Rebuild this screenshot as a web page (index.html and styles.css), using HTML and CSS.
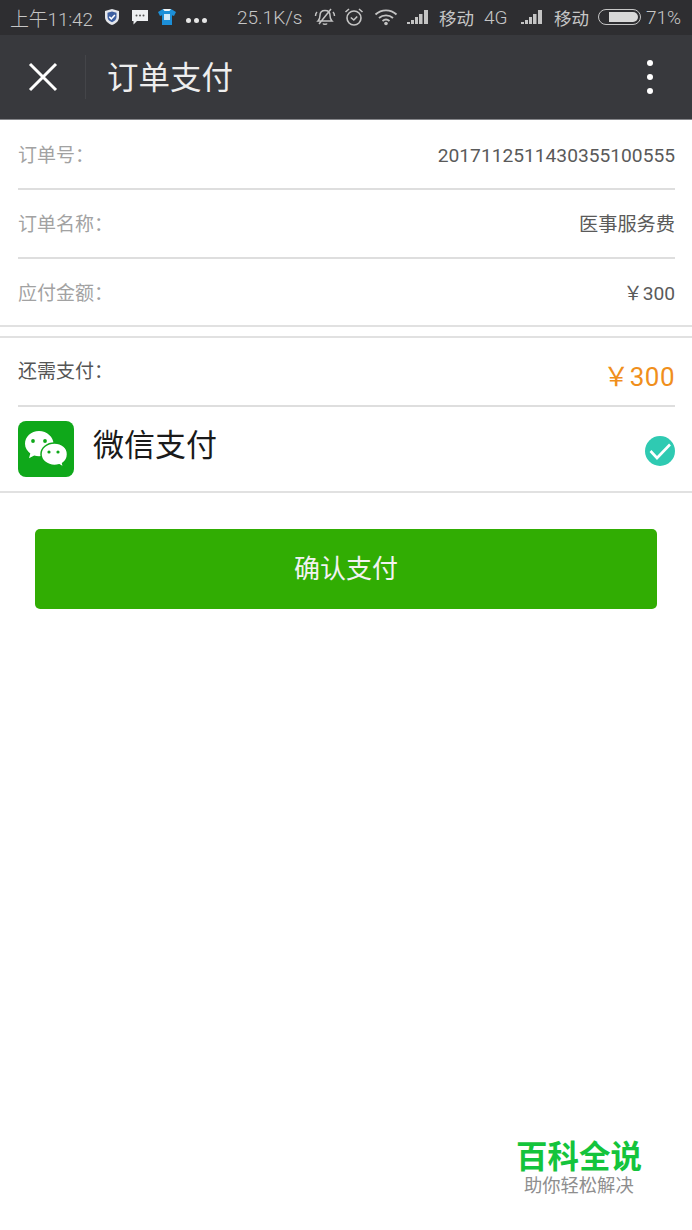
FILE: index.html
```html
<!DOCTYPE html>
<html lang="zh">
<head>
<meta charset="utf-8">
<title>订单支付</title>
<link rel="stylesheet" href="styles.css">
</head>
<body>
<div class="page">
  <div class="status">
    <span class="st-time">上午11:42</span>
    <svg class="ic-shield" width="16" height="18" viewBox="0 0 16 18"><path d="M8 1l7 2v6c0 4-3 6.500-7 8-4-1.500-7-4-7-8V3z" fill="#e4e6ea"/><path d="M8 3.500l4.500 1.300v4.200c0 2.600-2 4.200-4.500 5.300-2.500-1.100-4.500-2.700-4.500-5.300V4.800z" fill="#3d5fa0"/><path d="M5.300 8.800l2 2 3.600-3.800" stroke="#fff" stroke-width="1.500" fill="none"/></svg>
    <svg class="ic-msg" width="18" height="18" viewBox="0 0 18 18"><path d="M1 2h16v11H6l-3.500 3.500V13H1z" fill="#eef0f2"/><circle cx="5.500" cy="7.500" r="1" fill="#555"/><circle cx="9" cy="7.500" r="1" fill="#555"/><circle cx="12.500" cy="7.500" r="1" fill="#555"/></svg>
    <svg class="ic-shirt" width="20" height="18" viewBox="0 0 20 18"><path d="M6 1h8l5 3-2 4-2-.8V17H5V7.200L3 8 1 4z" fill="#1c8fd8"/><path d="M6 1h8l-1.500 2h-5z" fill="#f1f4f6"/><rect x="7" y="6" width="6" height="6" fill="#cfe8f8"/></svg>
    <span class="st-dots"><i></i><i></i><i></i></span>
    <span class="st-speed">25.1K/s</span>
    <svg class="ic-bell" width="22" height="20" viewBox="0 0 22 20"><path d="M11 3.500c-3 0-5 2-5 5 0 2.500-.5 4-2 5.500h14c-1.500-1.500-2-3-2-5.500 0-3-2-5-5-5zM9 16.500c.5 1 3.500 1 4 0M5 17L17 2M1.500 9c0-2 .5-3 1.500-4M20.500 9c0-2-.5-3-1.500-4" fill="none" stroke="#c4c4c4" stroke-width="1.500"/></svg>
    <svg class="ic-alarm" width="20" height="20" viewBox="0 0 20 20"><circle cx="10" cy="11" r="7" fill="none" stroke="#c4c4c4" stroke-width="1.600"/><path d="M6.800 10.500l3 2.500 3.400-3.500M1.500 5L5 2M18.500 5L15 2" fill="none" stroke="#c4c4c4" stroke-width="1.600"/></svg>
    <svg class="ic-wifi" width="24" height="18" viewBox="0 0 24 18"><path d="M1.500 6.500c6-5.500 15-5.500 21 0M5 10c4-3.500 10-3.500 14 0M8.500 13c2-1.600 5-1.600 7 0" fill="none" stroke="#c4c4c4" stroke-width="1.900"/><circle cx="12" cy="15.500" r="1.800" fill="#c4c4c4"/></svg>
    <svg class="ic-sig" width="22" height="16" viewBox="0 0 22 16"><path d="M0 13h3v2H0zM4 11h3v4H4zM8 8h3v7H8zM12 5h3.500v10H12zM17 1h4v14h-4z" fill="#c4c4c4"/></svg>
    <span class="st-text st-op1">移动</span>
    <span class="st-4g">4G</span>
    <svg class="ic-sig ic-sig2" width="22" height="16" viewBox="0 0 22 16"><path d="M0 13h3v2H0zM4 11h3v4H4zM8 8h3v7H8zM12 5h3.500v10H12zM17 1h4v14h-4z" fill="#c4c4c4"/></svg>
    <span class="st-text st-op2">移动</span>
    <span class="battery"><span class="battery-fill"></span></span>
    <span class="st-pct">71%</span>
  </div>

  <header class="nav">
    <svg class="nav-close" width="30" height="30" viewBox="0 0 30 30"><path d="M2 2l26 26M28 2L2 28" stroke="#fff" stroke-width="3" fill="none"/></svg>
    <span class="nav-sep"></span>
    <h1 class="nav-title">订单支付</h1>
    <span class="nav-more"><i></i><i></i><i></i></span>
  </header>

  <section class="group group-order">
    <div class="row"><span class="label">订单号：</span><span class="value value-num">2017112511430355100555</span></div>
    <div class="row"><span class="label">订单名称：</span><span class="value value-cjk">医事服务费</span></div>
    <div class="row row-last"><span class="label label-last">应付金额：</span><span class="value value-last">￥300</span></div>
  </section>

  <section class="group group-pay">
    <div class="row row-due"><span class="label-dark">还需支付：</span><span class="due">￥300</span></div>
    <div class="pay-method">
      <span class="wx-logo">
        <svg width="56" height="56" viewBox="0 0 56 56"><path d="M21 10C13 10 7 15.700 7 22.800c0 4 2.300 7.500 5.300 9.800l-1.300 4.600 5.200-2.800c1.500.5 3.300.8 4.800.8 8 0 14.500-5.700 14.500-12.400S29 10 21 10z" fill="#fff"/><circle cx="15" cy="20" r="1.900" fill="#0fa81a"/><circle cx="27" cy="20" r="1.900" fill="#0fa81a"/><path d="M36.500 22c-7.500 0-13.500 5-13.500 11.200s6 11.200 13.500 11.200c1.700 0 3.300-.3 4.800-.7l4.300 2.700-1-4c3-2.100 4.900-5.400 4.900-9.200C49.500 27 44 22 36.500 22z" fill="#fff" stroke="#0fa81a" stroke-width="1.500"/><circle cx="31" cy="31" r="1.600" fill="#0fa81a"/><circle cx="40" cy="31" r="1.600" fill="#0fa81a"/></svg>
      </span>
      <span class="pay-name">微信支付</span>
      <svg class="pay-check" width="30" height="30" viewBox="0 0 30 30"><circle cx="15" cy="15" r="15" fill="#2fcab2"/><path d="M5.500 15l6.500 7L25 8.500" stroke="#fff" stroke-width="2.600" fill="none"/></svg>
    </div>
  </section>

  <button class="confirm" type="button">确认支付</button>

  <div class="watermark">
    <div class="wm-title">百科全说</div>
    <div class="wm-sub">助你轻松解决</div>
  </div>
</div>
</body>
</html>
```
FILE: styles.css
```css
* { box-sizing: border-box; }
html, body { margin: 0; padding: 0; background: #fff; }
body { font-family: Roboto, "Noto Sans CJK SC", sans-serif; }
.page { position: relative; width: 692px; height: 1230px; overflow: hidden; }

.status { height: 35px; padding-bottom: 1px; background: #2e2e31; display: flex; align-items: center; padding-left: 10px; color: #c6c6c6; font-size: 19px; font-weight: 300; white-space: nowrap; }
.status > * { flex: none; }
.st-time { width: 83px; letter-spacing: -0.2px; }
.ic-shield { margin-left: 11px; }
.ic-msg { margin-left: 11px; }
.ic-shirt { margin-left: 8px; }
.st-dots { display: flex; gap: 3px; margin-left: 9px; margin-top: 7px; }
.st-dots i { width: 5px; height: 5px; border-radius: 50%; background: #e6e6e6; }
.st-speed { margin-left: 30px; width: 68px; }
.ic-bell { margin-left: 9px; }
.ic-alarm { margin-left: 8px; }
.ic-wifi { margin-left: 10px; }
.ic-sig { margin-left: 9px; }
.st-text { font-size: 17.500px; width: 35px; font-family: "Noto Sans CJK SC", sans-serif; font-weight: 400; }
.st-op1 { margin-left: 10px; }
.st-4g { margin-left: 10px; width: 26px; }
.ic-sig2 { margin-left: 11px; }
.st-op2 { margin-left: 11px; }
.battery { margin-left: 9px; width: 43px; height: 16px; border: 1px solid #c6c6c6; border-radius: 8px; padding: 2px; display: flex; justify-content: flex-end; }
.battery-fill { width: 29px; height: 10px; background: #d8d8d8; border-radius: 0 5px 5px 0; }
.st-pct { margin-left: 5px; }

.nav { height: 85px; background: #38393d; border-bottom: 1px solid #85868a; display: flex; align-items: center; padding: 0 39px 0 28px; }
.nav-close { flex: none; }
.nav-sep { width: 1px; height: 44px; background: #444549; margin-left: 27px; }
.nav-title { margin: 0 0 2px 21px; flex: 1; font-size: 31.500px; font-weight: 400; line-height: 1; color: #eeeeee; font-family: "Noto Sans CJK SC", sans-serif; }
.nav-more { display: flex; flex-direction: column; gap: 8px; }
.nav-more i { width: 6px; height: 6px; border-radius: 50%; background: #fff; }

.group { border-bottom: 2px solid #e1e1e1; }
.group-order { height: 207px; padding-top: 1px; }
.group-pay { margin-top: 9px; border-top: 2px solid #e1e1e1; height: 157px; }

.row { height: 69px; margin: 0 17px 0 18px; display: flex; align-items: center; justify-content: space-between; border-bottom: 2px solid #dedede; }
.row-last { border-bottom: 0; }
.label { color: #a2a2a2; font-size: 19px; padding-bottom: 2px; font-family: "Noto Sans CJK SC", sans-serif; }
.label-last { padding-bottom: 4px; }
.label-dark { color: #555; font-size: 19px; padding-bottom: 4px; font-family: "Noto Sans CJK SC", sans-serif; }
.value { color: #5a5a5a; font-family: Roboto, "Noto Sans CJK SC", sans-serif; font-size: 19.200px; }
.value-num { padding-top: 2px; }
.value-cjk { padding-bottom: 2px; }
.value-last { padding-bottom: 4px; }
.due { color: #f08f1c; font-size: 26px; letter-spacing: 0.5px; padding-top: 6px; }

.pay-method { display: flex; align-items: center; height: 86px; padding: 0 17px 2px 18px; }
.wx-logo { width: 56px; height: 56px; border-radius: 8px; background: #0fa81a; overflow: hidden; display: block; }
.wx-logo svg { display: block; }
.pay-name { margin-left: 19px; flex: 1; font-size: 31px; color: #1a1a1a; font-family: "Noto Sans CJK SC", sans-serif; line-height: 1; margin-top: -14px; }
.pay-check { margin-top: 4px; }

.confirm { display: block; width: 622px; height: 80px; margin: 36px 0 0 35px; background: #31ad03; border: 0; border-radius: 5px; color: #f2f2f2; font-size: 26px; font-family: "Noto Sans CJK SC", sans-serif; padding: 0 0 5px; }

.watermark { position: absolute; left: 516px; top: 1136px; width: 126px; }
.wm-title { font-size: 31.500px; line-height: 36px; font-weight: 700; color: #14c43c; font-family: "Noto Sans CJK SC", sans-serif; white-space: nowrap; }
.wm-sub { margin: 0 0 0 8px; font-size: 18.300px; line-height: 24px; color: #8e8e8e; font-family: "Noto Sans CJK SC", sans-serif; white-space: nowrap; }
```
